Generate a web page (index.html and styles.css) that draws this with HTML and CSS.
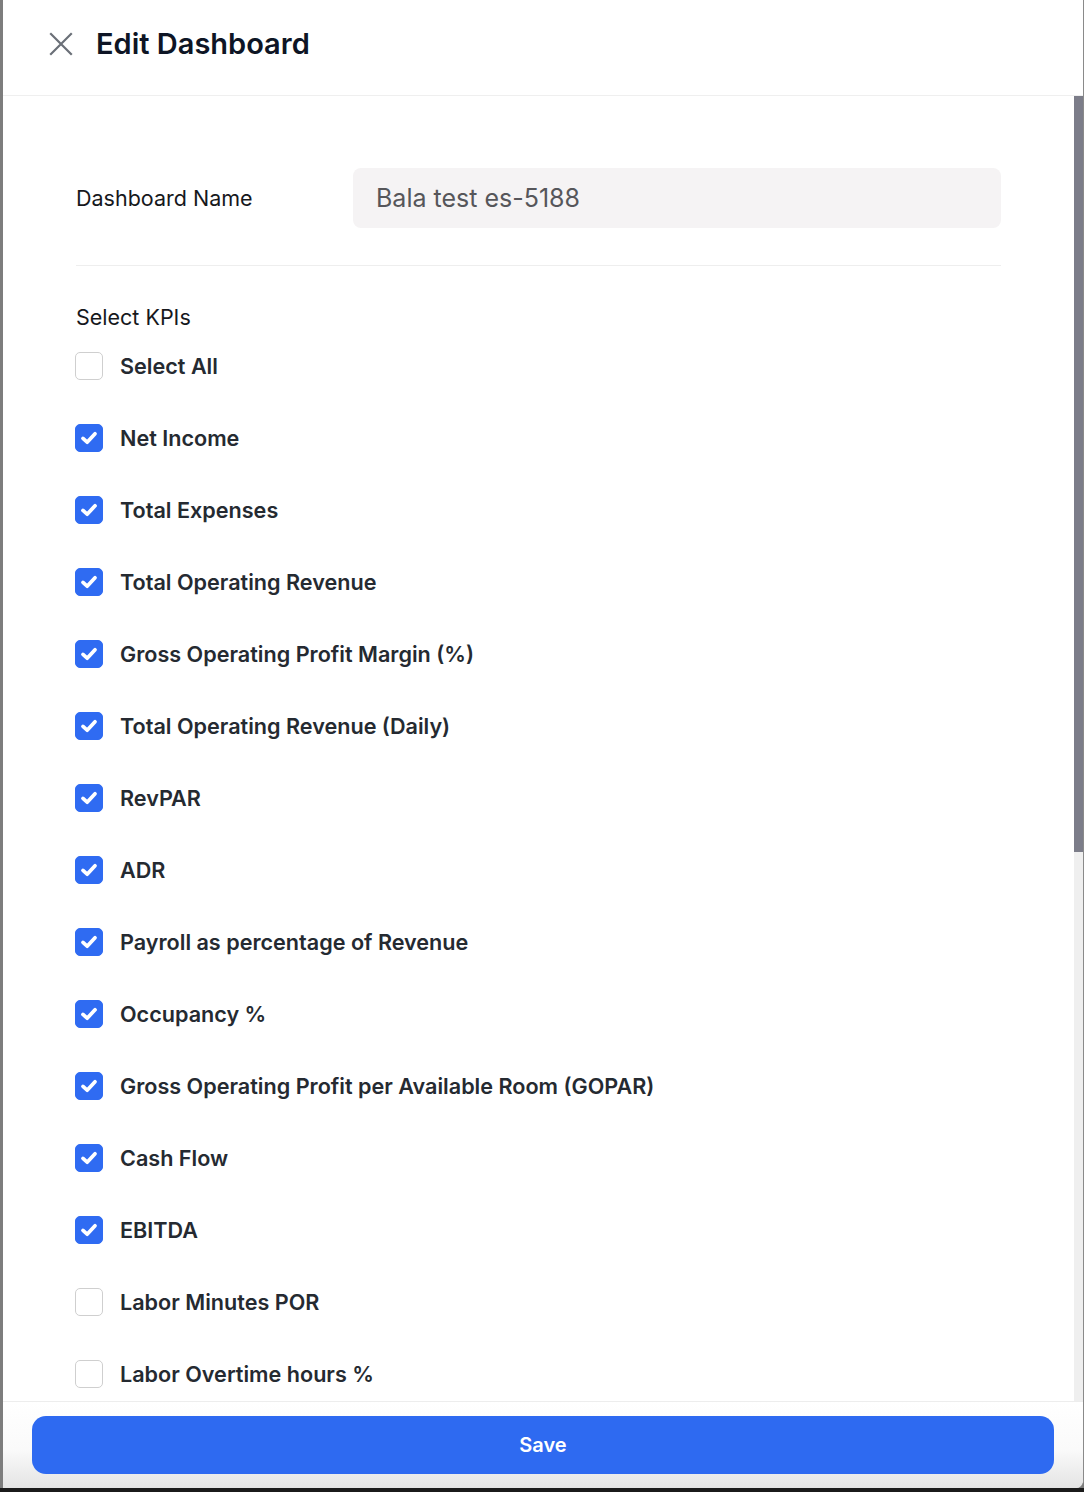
FILE: index.html
```html
<!DOCTYPE html>
<html lang="en">
<head>
  <meta charset="UTF-8" />
  <meta name="viewport" content="width=device-width, initial-scale=1.0"/>
  <title>Edit Dashboard</title>
  <link rel="stylesheet" href="styles.css">
</head>
<body>
  <div class="panel">
    <header class="header">
      <button class="close" aria-label="Close">
        <svg width="24" height="24" viewBox="0 0 24 24" fill="none" stroke="#6b7078" stroke-width="2.2" stroke-linecap="square">
          <path d="M2 2 L22 22 M22 2 L2 22"/>
        </svg>
      </button>
      <h1>Edit Dashboard</h1>
    </header>

    <div class="body-row">
      <div class="content">
        <div class="field">
          <label for="dashName">Dashboard Name</label>
          <input type="text" id="dashName" value="Bala test es-5188"/>
        </div>

        <div class="kpis">
          <p class="section-title">Select KPIs</p>
          <ul class="kpi-list">
            <li><span class="box"></span>Select All</li>
            <li><span class="box checked"></span>Net Income</li>
            <li><span class="box checked"></span>Total Expenses</li>
            <li><span class="box checked"></span>Total Operating Revenue</li>
            <li><span class="box checked"></span>Gross Operating Profit Margin (%)</li>
            <li><span class="box checked"></span>Total Operating Revenue (Daily)</li>
            <li><span class="box checked"></span>RevPAR</li>
            <li><span class="box checked"></span>ADR</li>
            <li><span class="box checked"></span>Payroll as percentage of Revenue</li>
            <li><span class="box checked"></span>Occupancy %</li>
            <li><span class="box checked"></span>Gross Operating Profit per Available Room (GOPAR)</li>
            <li><span class="box checked"></span>Cash Flow</li>
            <li><span class="box checked"></span>EBITDA</li>
            <li><span class="box"></span>Labor Minutes POR</li>
            <li><span class="box"></span>Labor Overtime hours %</li>
          </ul>
        </div>
      </div>
      <div class="scrollbar"><div class="thumb"></div></div>
    </div>

    <footer class="footer">
      <button class="save">Save</button>
    </footer>
  </div>
  <div class="bottom-bar"></div>
</body>
</html>
```

FILE: styles.css
```css
* {
  box-sizing: border-box;
}
body {
  margin: 0;
  padding-left: 3px;
  height: 1492px;
  background: #7d7d7d;
  font-family: Inter, "Noto Sans", sans-serif;
  color: #1a1d23;
  display: flex;
  flex-direction: column;
  overflow: hidden;
}
.panel {
  height: 1488px;
  background: #fff;
  border-right: 1px solid #8a8a8a;
  border-bottom-right-radius: 8px;
  display: flex;
  flex-direction: column;
  overflow: hidden;
}
.bottom-bar {
  height: 4px;
  background: #1b1b1b;
  margin-left: -3px;
}
.header {
  height: 96px;
  flex-shrink: 0;
  display: flex;
  align-items: center;
  gap: 22px;
  padding: 0 0 8px 45px;
  border-bottom: 1px solid #efefef;
}
.close {
  border: none;
  background: none;
  padding: 0;
  width: 26px;
  height: 26px;
  display: flex;
  align-items: center;
  justify-content: center;
  cursor: pointer;
}
.header h1 {
  margin: 0;
  font-size: 29px;
  font-weight: 600;
  color: #0e1525;
}
.body-row {
  flex: 1;
  display: flex;
  min-height: 0;
}
.content {
  flex: 1;
  overflow: hidden;
  padding: 72px 73px 0;
}
.scrollbar {
  width: 9px;
  flex-shrink: 0;
  background: #efefef;
}
.thumb {
  height: 756px;
  background: #7c7d89;
}
.field {
  display: grid;
  grid-template-columns: 277px 1fr;
  align-items: center;
  padding-bottom: 37px;
  border-bottom: 1px solid #eeeeee;
}
.field label {
  font-size: 21.5px;
  color: #16181c;
}
.field input {
  height: 60px;
  border: none;
  border-radius: 8px;
  background: #f5f3f4;
  padding: 0 23px;
  font-family: inherit;
  font-size: 25px;
  color: #56565a;
  outline: none;
}
.kpis {
  padding-top: 39px;
}
.section-title {
  margin: 0 0 23px;
  font-size: 21.5px;
  line-height: 24px;
  color: #16181c;
}
.kpi-list {
  list-style: none;
  margin: 0;
  padding: 0;
  display: flex;
  flex-direction: column;
  gap: 44px;
}
.kpi-list li {
  display: flex;
  align-items: center;
  gap: 17px;
  height: 28px;
  font-size: 21.6px;
  font-weight: 600;
  color: #252a31;
}
.box {
  width: 28px;
  height: 28px;
  flex-shrink: 0;
  margin-left: -1px;
  border: 1px solid #cfcfcf;
  border-radius: 5px;
  background: #fff;
}
.box.checked {
  border-color: #2f6bf2;
  background: #2f6bf2 url("data:image/svg+xml,%3Csvg xmlns='http://www.w3.org/2000/svg' viewBox='0 0 28 28'%3E%3Cpath d='M7.5 14.5 L12 18.5 L20.5 9.5' fill='none' stroke='white' stroke-width='4' stroke-linecap='round' stroke-linejoin='round'/%3E%3C/svg%3E") center / 100% no-repeat;
}
.footer {
  height: 87px;
  flex-shrink: 0;
  border-top: 1px solid #ededed;
  padding: 14px 29px 13px 29px;
  background: linear-gradient(#ffffff, #fafafa 55%, #e4e4e4);
}
.save {
  width: 100%;
  height: 58px;
  border: none;
  border-radius: 14px;
  background: #2e6af1;
  color: #fff;
  font-family: inherit;
  font-size: 20px;
  font-weight: 600;
  cursor: pointer;
}
```
